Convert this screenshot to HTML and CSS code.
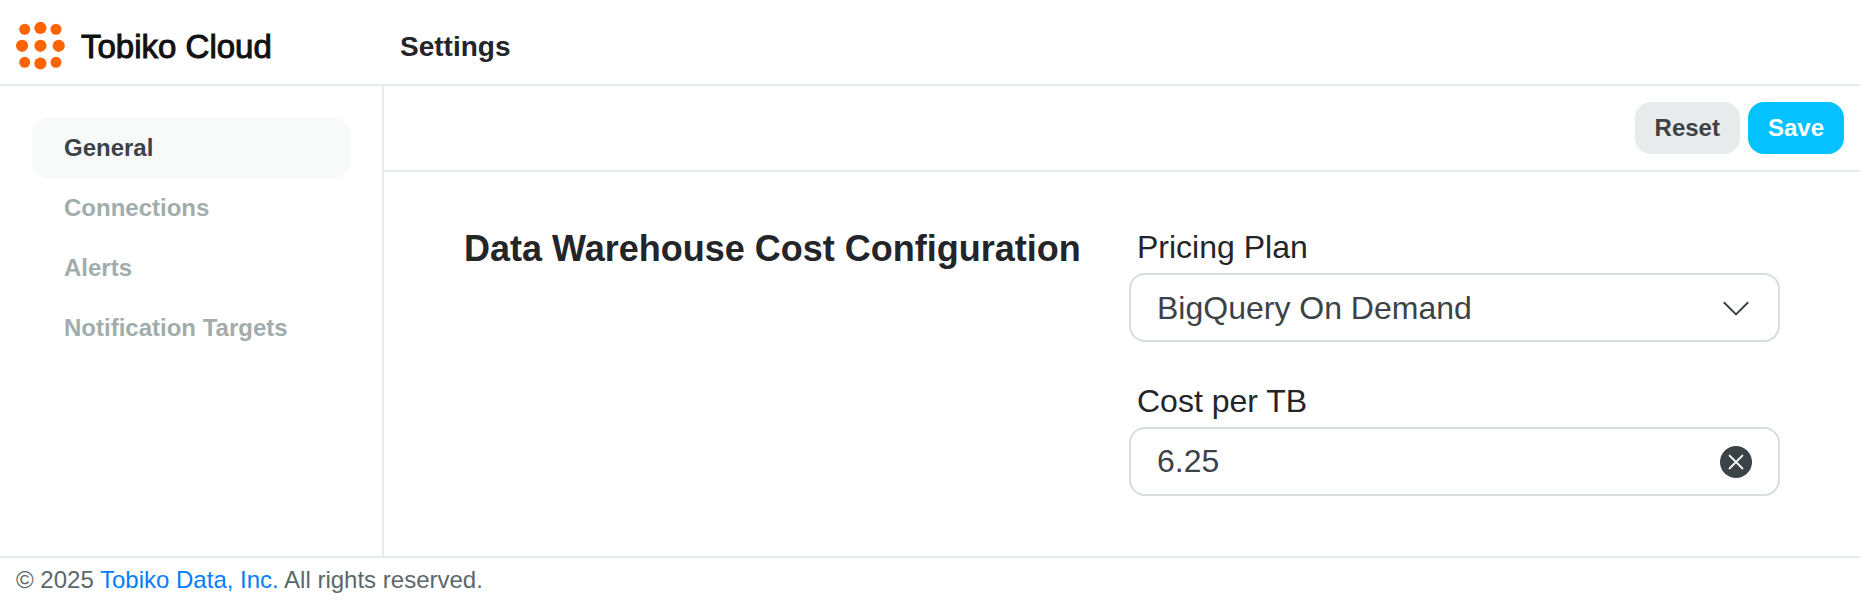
FILE: index.html
```html
<!DOCTYPE html>
<html lang="en">
<head>
<meta charset="utf-8">
<title>Settings – Tobiko Cloud</title>
<link rel="stylesheet" href="styles.css">
</head>
<body class="app">
  <header class="header">
    <a class="brand" href="#">
      <svg class="brand-mark" viewBox="0 0 49 48" width="49" height="48" aria-hidden="true">
        <circle cx="8.7" cy="7.3" r="5.5"/><circle cx="24.4" cy="6" r="6.1"/><circle cx="40" cy="7.3" r="5.5"/>
        <circle cx="6.1" cy="23.8" r="6.1"/><circle cx="24.4" cy="23.8" r="6.1"/><circle cx="42.7" cy="23.8" r="6.1"/>
        <circle cx="8.7" cy="40.3" r="5.5"/><circle cx="24.4" cy="41.5" r="6.1"/><circle cx="40" cy="40.3" r="5.5"/>
      </svg>
      <span class="brand-name">Tobiko Cloud</span>
    </a>
    <h1 class="page-title">Settings</h1>
  </header>

  <div class="body">
    <nav class="sidebar" aria-label="Settings sections">
      <a class="nav-item nav-item-active" href="#" aria-current="page">General</a>
      <a class="nav-item" href="#">Connections</a>
      <a class="nav-item" href="#">Alerts</a>
      <a class="nav-item" href="#">Notification Targets</a>
    </nav>

    <main class="main">
      <div class="toolbar">
        <button class="button" type="reset" form="cost-form">Reset</button>
        <button class="button button-primary" type="submit" form="cost-form">Save</button>
      </div>
      <form class="section" id="cost-form">
        <h2 class="section-title">Data Warehouse Cost Configuration</h2>
        <div class="fields">
          <div class="field">
            <label class="field-label" for="plan">Pricing Plan</label>
            <div class="control">
              <select class="control-input" id="plan">
                <option>BigQuery On Demand</option>
              </select>
              <svg class="control-icon chevron" viewBox="0 0 32 32" width="32" height="32" aria-hidden="true">
                <path d="M3.8 10.2 16 22.4 28.2 10.2"/>
              </svg>
            </div>
          </div>
          <div class="field">
            <label class="field-label" for="cost">Cost per TB</label>
            <div class="control">
              <input class="control-input" id="cost" type="text" inputmode="decimal" value="6.25">
              <button class="control-icon clear" type="button" aria-label="Clear">
                <svg class="clear-mark" viewBox="0 0 32 32" width="32" height="32" aria-hidden="true">
                  <path d="M9.6 9.6 22.4 22.4M22.4 9.6 9.6 22.4"/>
                </svg>
              </button>
            </div>
          </div>
        </div>
      </form>
    </main>
  </div>

  <footer class="footer">© 2025 <a class="footer-link" href="#">Tobiko Data, Inc.</a> All rights reserved.</footer>
</body>
</html>
```

FILE: styles.css
```css
*,
*::before,
*::after {
  box-sizing: border-box;
}

.app {
  display: flex;
  flex-direction: column;
  min-height: 100vh;
  margin: 0;
  background: #fff;
  color: #232529;
  font-family: "Liberation Sans", Arial, sans-serif;
  font-size: 24px;
  line-height: 28px;
}

.header {
  display: grid;
  grid-template-columns: 384px 1fr;
  align-items: center;
  padding: 22px 16px 14px;
  border-bottom: 2px solid #e7ebea;
}

.brand {
  display: flex;
  align-items: center;
  gap: 16px;
  color: #101112;
  text-decoration: none;
}

.brand-mark {
  fill: #ff6400;
}

.brand-name {
  padding-top: 2px;
  font-size: 33px;
  line-height: 40px;
  -webkit-text-stroke: 1px #101112;
}

.page-title {
  margin: 0;
  padding-top: 2px;
  font-size: 28px;
  line-height: 32px;
}

.body {
  display: flex;
  flex: 1;
}

.sidebar {
  flex: 0 0 384px;
  padding: 32px;
  border-right: 2px solid #e7ebea;
}

.nav-item {
  display: block;
  padding: 16px 32px;
  border-radius: 16px;
  color: #a1adad;
  font-weight: 700;
  text-decoration: none;
}

.nav-item-active {
  background: #f8faf9;
  color: #3b4347;
}

.main {
  flex: 1;
}

.toolbar {
  display: flex;
  justify-content: flex-end;
  gap: 8px;
  padding: 16px;
  border-bottom: 2px solid #e7ebea;
}

.button {
  padding: 12px 20px;
  border: 0;
  border-radius: 16px;
  background: #e7ebec;
  color: #3b4347;
  font: inherit;
  font-weight: 700;
}

.button-primary {
  background: #03c2ff;
  color: #fff;
}

.section {
  display: grid;
  grid-template-columns: 1fr 1fr;
  gap: 14px;
  padding: 56px 80px;
}

.section-title {
  margin: 0;
  font-size: 36px;
  line-height: 42px;
}

.fields {
  display: grid;
  gap: 40px;
}

.field {
  display: grid;
  gap: 7px;
}

.field-label {
  padding: 0 8px;
  font-size: 32px;
  line-height: 38px;
}

.control {
  display: grid;
  align-items: center;
}

.control-input {
  grid-area: 1 / 1;
  width: 100%;
  height: 69px;
  margin: 0;
  padding: 0 72px 0 26px;
  border: 2px solid #d6dddc;
  border-radius: 16px;
  appearance: none;
  background: #fff;
  color: #3b4347;
  font: inherit;
  font-size: 32px;
  line-height: 40px;
}

.control-icon {
  grid-area: 1 / 1;
  justify-self: end;
  margin-right: 28px;
}

.chevron {
  fill: none;
  stroke: #3b4347;
  stroke-width: 2;
  pointer-events: none;
}

.clear {
  padding: 0;
  border: 0;
  border-radius: 50%;
  background: #3b4347;
}

.clear-mark {
  display: block;
  fill: none;
  stroke: #fff;
  stroke-width: 2;
  stroke-linecap: round;
}

.footer {
  padding: 8px 16px 10px;
  border-top: 2px solid #e7ebea;
  color: #5b686a;
}

.footer-link {
  color: #057dff;
  text-decoration: none;
}
```
